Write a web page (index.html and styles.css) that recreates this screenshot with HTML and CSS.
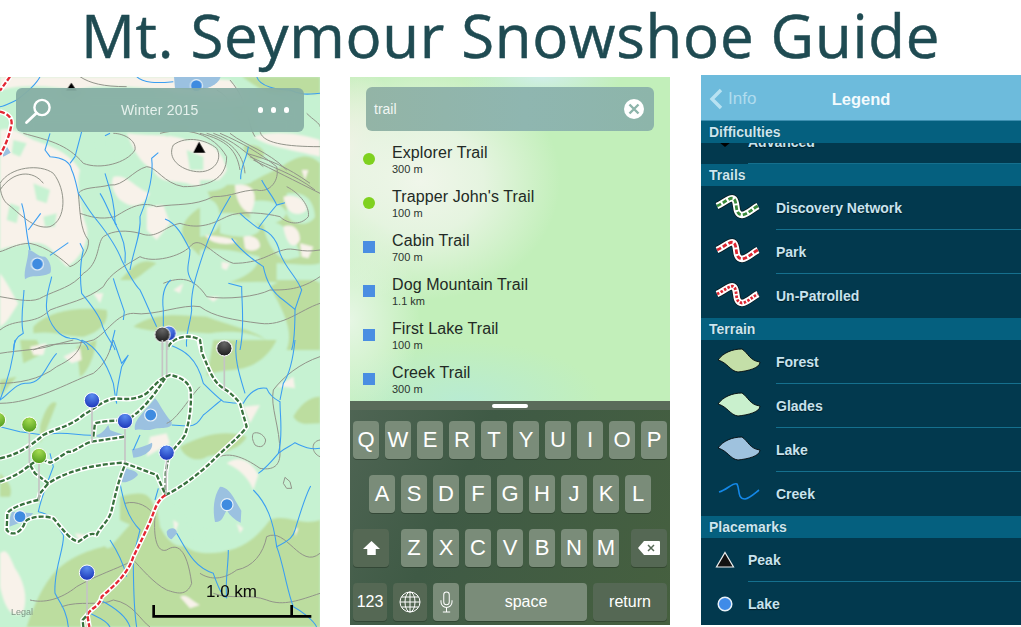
FILE: index.html
```html
<!DOCTYPE html>
<html lang="en">
<head>
<meta charset="utf-8">
<title>Mt. Seymour Snowshoe Guide</title>
<link rel="stylesheet" href="styles.css">
</head>
<body>
<h1 class="title">Mt. Seymour Snowshoe Guide</h1>
<main class="screens">

<section class="screen map-screen">
<svg class="map" viewBox="0 0 320 550" preserveAspectRatio="none">
<defs>
<radialGradient id="gblue" cx="50%" cy="20%" r="80%"><stop offset="0" stop-color="#5b8cf0"/><stop offset="1" stop-color="#1a35b8"/></radialGradient>
<radialGradient id="ggreen" cx="50%" cy="20%" r="80%"><stop offset="0" stop-color="#a5dc50"/><stop offset="1" stop-color="#4f9a1c"/></radialGradient>
<radialGradient id="gblack" cx="50%" cy="20%" r="80%"><stop offset="0" stop-color="#666"/><stop offset="1" stop-color="#1c1c1c"/></radialGradient>
<filter id="soft" x="-5%" y="-5%" width="110%" height="110%"><feGaussianBlur stdDeviation="0.8"/></filter>
<filter id="soft2" x="-5%" y="-5%" width="110%" height="110%"><feGaussianBlur stdDeviation="0.3"/></filter>
</defs>
<rect class="mint" width="320" height="550"/>

<g filter="url(#soft)">
<g transform="translate(0,-7) scale(.33333)">
<g class="cream">
<path d="M0,20 L520,20 L690,30 L740,90 C620,70 560,90 500,60 C400,50 300,40 230,60 C160,50 80,40 0,60Z"/>
<path d="M0,180 C40,170 60,190 100,210 C160,230 210,250 240,300 C230,340 235,400 260,470 C270,510 240,570 200,590 C160,550 150,510 80,520 C40,530 20,530 0,540Z"/>
<path d="M0,610 C30,650 40,680 55,700 C30,740 20,760 0,770Z"/>
<path d="M380,190 C460,200 500,190 560,210 C620,200 670,240 680,300 C660,345 600,360 560,340 C510,330 480,340 460,300 C420,280 400,240 380,190Z"/>
<path d="M340,320 C380,310 400,350 450,370 C430,410 400,420 360,390 C340,370 330,340 340,320Z"/>
<path d="M440,410 L490,405 L510,460 L470,510 L440,480Z"/>
<path d="M760,200 C820,180 900,190 960,210 L960,260 C880,240 800,230 760,200Z"/>
<path d="M280,670 L310,670 L300,700Z"/>
<path d="M520,660 L550,640 L540,670Z"/>
<path d="M620,680 L660,680 L640,695Z"/>
</g>
<g class="mint">
<path d="M100,340 L150,360 L140,400 L110,390Z"/>
<path d="M30,400 L60,410 L50,460 L20,450Z"/>
<path d="M340,250 C380,240 410,260 380,285 C350,290 330,275 340,250Z"/>
<path d="M170,200 L190,190 L190,235 L175,235Z"/>
<path d="M560,240 L610,260 L610,300 L570,300Z"/>
<path d="M470,170 C500,170 530,170 540,190 L500,200Z"/>
<path d="M130,440 L170,430 L165,470 L135,470Z"/>
<path d="M40,210 L80,220 L60,260 L35,250Z"/>
<path d="M290,210 L320,205 L320,235 L295,240Z"/>
<path d="M230,60 L300,60 L280,90 L235,90Z"/>
</g>
<g class="forest">
<path d="M725,20 C760,40 800,80 840,70 C880,60 930,80 960,70 L960,20Z"/>
<path d="M730,230 C770,215 800,240 790,260 C770,280 740,270 730,230Z"/>
<path d="M610,345 C680,340 720,350 750,340 C780,320 830,300 860,280 C900,255 930,250 960,280 L960,600 C930,640 890,620 850,640 C800,630 720,640 660,635 C640,590 590,550 560,520 C530,480 550,440 620,400 C640,385 625,370 610,345Z"/>
<path d="M360,630 C400,590 420,560 470,580 C440,600 420,620 400,630Z"/>
<path d="M810,650 C860,620 920,610 960,640 L960,840 L860,840 C880,790 860,740 810,650Z"/>
<path d="M100,770 C150,720 240,710 320,720 C330,760 290,790 250,800 C200,800 160,780 100,790Z"/>
<path d="M400,770 C470,720 560,740 620,740 C700,770 760,780 800,810 C720,770 640,790 620,790 C540,780 460,790 400,770Z"/>
</g>
<g class="mint">
<path d="M600,330 L690,330 C680,360 640,365 600,365Z"/>
<path d="M600,390 C640,380 660,400 660,450 C660,480 630,500 600,500Z"/>
<path d="M660,430 C700,425 770,440 780,480 C760,510 690,500 660,490Z"/>
<path d="M750,395 C790,385 850,395 860,430 C840,470 780,470 750,450Z"/>
<path d="M860,370 C900,365 940,375 945,440 C930,470 870,470 860,430Z"/>
<path d="M600,540 C650,530 720,545 780,560 C770,600 740,620 680,640 L600,640Z"/>
<path d="M830,580 C870,580 930,590 960,580 L960,630 L830,630Z"/>
<path d="M790,450 C830,450 890,480 900,560 L860,570 C820,560 790,500 790,450Z"/>
</g>
<g class="cream">
<path d="M705,345 C720,340 760,345 762,370 C770,390 755,430 750,430 C720,420 705,380 705,345Z"/>
<path d="M730,500 C750,495 780,500 780,530 C770,545 745,545 735,535Z"/>
<path d="M615,495 C650,500 690,500 710,515 L700,520 C670,525 630,520 615,495Z"/>
<path d="M850,380 C880,370 920,385 920,420 C900,440 860,440 850,380Z"/>
<path d="M850,470 C870,460 900,470 900,510 C885,540 860,530 850,470Z"/>
<path d="M900,520 L940,530 L925,565 L905,560Z"/>
<path d="M665,575 L690,580 L680,600 L665,595Z"/>
<path d="M905,300 L925,300 L915,330Z"/>
</g>
</g>
<g transform="translate(0,263) scale(.33333)">
<g class="forest">
<path d="M640,0 L830,0 C810,40 780,70 730,85 C680,95 640,90 620,110Z"/>
<path d="M60,0 L110,0 L130,40 L70,70Z"/>
<path d="M0,120 L0,170 L50,110Z"/>
<path d="M120,260 C140,190 160,180 170,190 C150,240 140,270 120,310Z"/>
<path d="M230,20 L290,0 C280,60 260,100 240,110Z"/>
<path d="M880,230 C910,180 940,170 960,170 L960,250 C930,250 900,260 880,230Z"/>
<path d="M540,320 C620,280 680,270 740,290 C720,330 660,340 620,350 C590,370 550,350 540,320Z"/>
<path d="M360,470 C440,450 450,460 470,520 C430,570 400,560 360,540Z"/>
<path d="M170,690 C240,630 290,630 340,610 C390,560 440,470 510,520 C520,600 560,640 620,640 C700,640 760,610 810,540 C860,520 900,560 960,540 L960,861 L80,861 C100,800 130,730 170,690Z"/>
<path d="M0,400 C20,420 40,440 30,470 L0,470Z"/>
</g>
<g class="mint">
<path d="M605,580 C625,535 700,535 725,585 C720,630 640,640 605,580Z"/>
<path d="M470,500 C510,470 560,530 575,590 C555,640 510,620 480,560Z"/>
<path d="M310,610 C340,610 350,620 320,625Z"/>
</g>
<g class="cream">
<path d="M0,640 C20,620 30,650 45,685 C70,720 85,770 70,815 C40,840 15,810 0,740Z"/>
<path d="M540,770 C560,760 570,780 600,795 L570,805Z"/>
<path d="M190,50 L240,25 L245,60 L215,70Z"/>
<path d="M90,20 L140,10 L130,45 L100,45Z"/>
<path d="M830,140 L880,110 L885,145 L850,140Z"/>
<path d="M680,370 C720,340 760,370 775,405 L760,450 C740,400 700,380 680,370Z"/>
<path d="M730,200 L780,195 L750,250Z"/>
<path d="M520,540 L535,550 L525,580Z"/>
<path d="M710,550 L730,565 L720,580Z"/>
<path d="M885,565 L895,565 L885,590Z"/>
<path d="M225,580 L260,585 L240,605Z"/>
<path d="M450,290 L500,280 L510,310 L440,350Z"/>
</g>
</g>
</g>

<g filter="url(#soft2)">
<g class="lake">
<g transform="translate(0,-7) scale(.33333)">
<path d="M522,20 L662,20 C655,45 620,58 590,60 L525,56Z"/>
<path d="M85,540 C100,540 110,560 135,560 C150,570 158,600 150,610 C120,625 95,612 75,628 C70,600 85,570 85,540Z"/>
<path d="M0,238 L22,232 L32,248 L10,260Z"/>
</g>
<g transform="translate(0,263) scale(.33333)">
<path d="M465,175 C480,190 490,220 515,245 C518,272 480,258 450,270 C430,272 415,265 405,270 C400,240 430,220 465,175Z"/>
<path d="M395,328 C420,325 440,315 456,308 C462,330 430,352 400,353Z"/>
<path d="M372,380 C385,392 410,388 414,405 C400,420 378,430 365,426Z"/>
<path d="M290,285 C310,280 320,260 325,255 L330,270 C340,275 360,280 370,285 C340,295 310,293 290,291Z"/>
<path d="M660,440 C680,440 695,460 705,480 L724,512 L722,548 C705,540 690,528 680,510 C670,530 665,548 645,546 C638,510 640,470 660,440Z"/>
<path d="M500,575 C510,560 530,562 531,580 L515,598 C505,595 500,585 500,575Z"/>
<path d="M36,515 L100,520 L80,540 L28,560 C25,545 30,530 36,515Z"/>
</g>
</g>

<g class="contour" transform="translate(0,-7) scale(.33333)">
<path d="M520,225 C560,195 620,210 650,235 C670,270 640,310 590,305 C540,300 500,265 520,225Z"/>
<path d="M0,340 C30,290 120,280 160,310 C200,360 200,450 150,470 C100,480 60,430 20,400 C10,390 0,370 0,340Z"/>
<path d="M70,190 C140,210 200,220 250,280 C300,300 380,280 405,240 C410,210 370,190 340,190"/>
<path d="M480,190 C560,170 640,190 680,260 C680,330 620,350 550,350 C490,340 470,290 440,290 C400,300 370,350 330,345 C290,355 250,350 235,370 C240,420 240,480 265,510 C270,540 240,580 210,590 C190,570 140,530 90,520 C50,520 20,540 0,545"/>
<path d="M600,190 C680,210 710,240 720,300"/><path d="M620,190 C690,210 730,250 735,310"/><path d="M640,190 C700,210 740,250 790,290"/><path d="M660,190 C730,220 780,250 830,290 C840,330 810,370 770,360 C720,360 700,380 640,380 C580,410 530,400 470,410 C420,390 380,420 345,440 C300,450 270,440 240,430"/>
<path d="M690,190 C740,230 800,240 860,300"/><path d="M740,250 C810,270 860,290 930,340"/><path d="M750,260 C810,290 880,310 945,360"/><path d="M760,270 C820,300 880,330 960,370"/>
<path d="M780,180 C780,220 860,230 960,230"/><path d="M920,130 C940,150 960,160 960,170"/>
<path d="M860,350 C900,370 930,410 925,440 C900,470 860,460 840,440 C800,430 720,420 680,440 C640,460 600,480 540,460 C490,470 470,510 420,490 C380,480 340,480 310,500 C290,520 300,580 250,610 C220,650 170,660 130,680 C100,700 60,690 0,680"/>
<path d="M960,540 C900,550 880,530 850,540 C810,550 780,580 700,580 C640,560 600,490 570,530 C540,560 460,580 420,560 C370,590 330,610 310,650 C260,690 200,700 150,720 C100,770 50,740 0,780"/>
<path d="M960,620 C900,660 860,660 810,660 C770,680 680,690 620,680 C580,620 540,620 490,640"/>
<path d="M960,700 C900,720 850,770 780,760 C700,750 640,740 600,710 C550,700 460,740 400,730 C350,730 320,790 280,810 C220,830 160,810 100,840"/>
<path d="M650,60 C690,80 700,120 720,150"/><path d="M690,30 C750,100 740,160 765,200"/>
<path d="M0,360 C40,300 100,300 130,340"/><path d="M240,20 C270,40 310,50 380,50"/>
</g>
<g class="contour" transform="translate(0,263) scale(.33333)">
<path d="M0,40 C60,30 120,30 160,15 L220,0"/>
<path d="M0,130 C50,130 120,120 170,80 C210,60 240,40 245,0"/>
<path d="M0,190 C100,190 200,130 280,100 C320,70 330,30 340,0"/>
<path d="M960,50 C900,70 850,110 820,150 C810,200 840,260 840,340 C840,385 810,390 780,385 C730,350 680,330 640,360"/>
<path d="M760,280 C770,275 790,280 797,300 C795,320 780,325 765,315 C757,300 755,290 760,280Z"/>
<path d="M850,430 L855,412 L870,425 L875,445 L860,445Z"/>
<path d="M960,300 C930,305 935,340 960,350"/>
<path d="M375,490 C410,480 450,500 465,530 C460,590 470,640 500,630 C530,610 560,620 575,730 C560,770 530,760 500,750 C460,730 420,680 400,660 C370,680 300,700 230,740 C180,780 130,790 90,780"/>
<path d="M960,640 C900,690 860,560 800,590 C790,640 760,680 710,690 C670,720 630,720 600,700"/>
<path d="M960,760 C900,780 850,800 800,780 C750,760 690,780 640,760"/>
<path d="M185,800 C240,780 300,800 340,780 C400,790 420,840 450,861"/>
<path d="M600,140 C570,170 530,240 500,250"/>
</g>

<g class="stream" transform="translate(0,-7) scale(.33333)">
<path d="M410,20 C430,40 470,40 520,35"/><path d="M120,20 C110,40 90,60 50,90 C30,100 10,110 0,110"/><path d="M770,20 C780,50 830,60 870,60 C910,80 940,70 960,70"/>
<path d="M150,190 L135,240 L150,260 C180,262 210,270 215,300 C225,320 230,350 235,370 C260,410 280,440 290,450 C330,500 350,530 365,570 C385,610 400,640 420,660 C440,700 450,730 470,770"/>
<path d="M245,185 L225,260 L210,280"/>
<path d="M315,310 C330,360 345,400 345,460 C370,500 380,540 375,580"/>
<path d="M300,370 C320,400 330,440 350,465"/>
<path d="M475,248 L455,265 C462,320 440,390 420,440 C425,490 400,540 390,600"/>
<path d="M330,190 L315,197"/>
<path d="M745,230 C740,270 720,290 722,328"/>
<path d="M785,330 C800,360 820,380 830,405 L855,398 L830,405 C810,430 790,450 775,475 C740,450 730,440 720,430"/>
<path d="M692,378 C660,430 630,490 610,550 C590,610 570,670 575,720 C570,770 555,790 560,830"/>
<path d="M495,447 C530,460 550,500 570,540 C570,580 550,600 580,640"/>
<path d="M695,505 C720,540 760,570 790,590 C800,640 820,670 850,690 L885,718 L905,660 C890,620 860,600 840,550 C830,500 800,480 775,475"/>
<path d="M885,718 C885,760 885,810 875,840"/>
<path d="M685,640 L725,650 C725,700 735,770 720,840"/>
<path d="M512,630 C490,650 485,680 490,720 L490,770"/>
<path d="M65,400 C80,450 75,480 90,540"/><path d="M122,430 L85,480"/><path d="M205,518 L150,556"/>
<path d="M240,520 L250,540 C240,580 240,630 245,670 C270,700 295,730 305,760 C315,800 340,820 345,840"/>
<path d="M155,620 C150,650 135,670 140,720 C150,770 180,800 210,805 C240,805 260,820 265,840"/>
<path d="M340,625 C350,660 365,700 373,725 L370,750"/>
<path d="M72,660 C70,700 60,750 70,790 C50,800 40,820 40,840"/>
<path d="M345,780 C340,800 335,820 330,840"/>
</g>
<g class="stream" transform="translate(0,263) scale(.33333)">
<path d="M45,0 C40,60 20,130 0,180"/><path d="M170,40 C140,70 130,130 80,130 C50,125 20,170 0,180"/>
<path d="M245,0 C290,20 320,70 340,130 C345,160 345,170 350,190"/><path d="M340,0 L365,70 L385,45 L365,80 C355,130 345,170 350,190"/>
<path d="M510,15 C550,30 590,50 610,130 C630,150 650,170 670,185 C700,190 720,190 730,190 C745,160 770,140 800,145 C810,170 830,180 840,185 C840,230 850,290 835,340 C810,370 790,390 775,400"/>
<path d="M885,0 C880,50 870,100 850,130 L840,180"/><path d="M710,0 C700,50 720,110 735,160"/>
<path d="M835,340 C860,320 870,320 885,308 C910,320 930,330 960,325"/>
<path d="M515,255 L560,258 C590,260 600,240 610,225 C630,210 650,190 665,180"/>
<path d="M0,260 L60,275 L130,285 C190,270 240,290 285,285"/>
<path d="M420,285 L400,330"/>
<path d="M150,340 L160,380 L145,420 C130,460 120,490 115,515 C150,520 170,550 190,585 C195,620 160,690 165,760 C180,790 200,810 205,861"/>
<path d="M360,430 C370,480 380,530 420,570 L400,650 C400,720 400,800 410,861"/>
<path d="M475,445 L465,480"/>
<path d="M530,580 C560,630 580,680 640,700 C650,730 670,780 680,770"/><path d="M685,630 C685,680 675,720 680,775"/>
<path d="M760,450 C800,490 820,540 830,620 C870,600 880,590 885,570 C900,520 920,460 932,438"/>
<path d="M830,620 C850,670 860,750 880,800 C900,810 940,840 950,861"/>
<path d="M330,600 C350,630 370,670 380,710"/><path d="M300,780 C340,800 380,830 390,861"/><path d="M270,820 C290,830 320,840 330,861"/>
</g>

<g class="trails" transform="translate(0,263) scale(.33333)">
<g class="casing">
<path d="M0,355 C50,345 90,320 130,285 C170,265 210,260 250,225 C285,205 310,180 345,175 C380,178 410,180 440,160 C465,135 480,115 510,105 C540,110 565,125 572,150 C575,190 570,240 555,285 C540,310 520,325 505,350 L497,400 L497,465"/>
<path d="M0,425 C30,415 60,400 90,375 L105,400 L145,430 C190,400 260,375 370,368 L470,405 L497,465"/>
<path d="M115,480 C70,490 30,505 22,520 L20,570 C40,595 70,570 75,545 C90,530 130,525 160,535 C190,570 210,600 235,605 C260,590 270,575 290,585 C300,560 330,540 335,510 C345,470 355,420 375,375"/>
<path d="M90,375 L120,355 L150,368 C170,360 200,335 205,335 C220,340 250,310 275,305 C310,300 340,295 375,290"/>
<path d="M280,290 L285,250 C300,245 340,240 375,243 C420,220 460,170 495,115"/>
<path d="M497,465 C540,445 600,400 640,360 C680,320 720,290 740,260 L720,190 C700,165 680,150 670,145 C640,125 630,95 615,60 C600,30 600,10 597,0"/>
<path d="M115,480 L120,460 L145,430"/>
<path d="M497,465 C470,480 465,510 450,545 C430,590 415,620 400,650 C385,700 340,740 305,770 C300,800 270,805 262,825 L268,861"/>
<path d="M250,861 L248,840 L262,825"/>
</g>
<g class="dash-green">
<path d="M0,355 C50,345 90,320 130,285 C170,265 210,260 250,225 C285,205 310,180 345,175 C380,178 410,180 440,160 C465,135 480,115 510,105 C540,110 565,125 572,150 C575,190 570,240 555,285 C540,310 520,325 505,350 L497,400 L497,465"/>
<path d="M0,425 C30,415 60,400 90,375 L105,400 L145,430 C190,400 260,375 370,368 L470,405 L497,465"/>
<path d="M115,480 C70,490 30,505 22,520 L20,570 C40,595 70,570 75,545 C90,530 130,525 160,535 C190,570 210,600 235,605 C260,590 270,575 290,585 C300,560 330,540 335,510 C345,470 355,420 375,375"/>
<path d="M90,375 L120,355 L150,368 C170,360 200,335 205,335 C220,340 250,310 275,305 C310,300 340,295 375,290"/>
<path d="M280,290 L285,250 C300,245 340,240 375,243 C420,220 460,170 495,115"/>
<path d="M497,465 C540,445 600,400 640,360 C680,320 720,290 740,260 L720,190 C700,165 680,150 670,145 C640,125 630,95 615,60 C600,30 600,10 597,0"/>
<path d="M115,480 L120,460 L145,430"/>
<path d="M250,861 L248,840 L262,825"/>
</g>
<path class="dash-red" d="M497,465 C470,480 465,510 450,545 C430,590 415,620 400,650 C385,700 340,740 305,770 C300,800 270,805 262,825 L268,861"/>
</g>
<g class="trails" transform="translate(0,-7) scale(.33333)">
<g class="casing">
<path d="M505,830 C520,800 570,790 600,810 L605,840"/>
<path d="M30,20 L0,62"/>
<path d="M0,125 C20,130 35,140 35,160 C30,190 20,220 0,255"/>
</g>
<path class="dash-green" d="M505,830 C520,800 570,790 600,810 L605,840"/>
<path class="dash-red" d="M30,20 L0,62"/>
<path class="dash-red" d="M0,125 C20,130 35,140 35,160 C30,190 20,220 0,255"/>
</g>
</g>

<g transform="translate(0,-7) scale(.33333)">
<path d="M597,215 L616,248 L580,248Z"/>
<path d="M214,38 L230,62 L198,62Z"/>
<circle class="lake-mark" cx="589" cy="47" r="18"/>
<circle class="lake-mark" cx="112" cy="582" r="18"/>
<g class="stalk"><path d="M487,800 L487,840"/><path d="M502,800 L502,840"/></g>
<g class="pin">
<circle cx="506" cy="790" r="22" fill="url(#gblue)"/>
<circle cx="487" cy="794" r="23" fill="url(#gblack)"/>
<circle cx="673" cy="834" r="23" fill="url(#gblack)"/>
</g>
</g>
<g transform="translate(0,263) scale(.33333)">
<circle class="lake-mark" cx="452" cy="225" r="18"/>
<circle class="lake-mark" cx="60" cy="530" r="18"/>
<circle class="lake-mark" cx="681" cy="494" r="18"/>
<g class="stalk">
<path d="M487,0 L487,110"/><path d="M500,0 L500,105"/><path d="M673,25 L673,150"/>
<path d="M276,181 L276,305"/><path d="M375,243 L375,368"/><path d="M500,338 L498,465"/>
<path d="M88,254 L88,370"/><path d="M117,348 L117,480"/><path d="M261,698 L261,825"/>
</g>
<g class="pin">
<circle cx="276" cy="181" r="23" fill="url(#gblue)"/>
<circle cx="375" cy="243" r="23" fill="url(#gblue)"/>
<circle cx="500" cy="338" r="23" fill="url(#gblue)"/>
<circle cx="261" cy="698" r="23" fill="url(#gblue)"/>
<circle cx="88" cy="254" r="23" fill="url(#ggreen)"/>
<circle cx="117" cy="348" r="23" fill="url(#ggreen)"/>
<circle cx="-6" cy="240" r="23" fill="url(#ggreen)"/>
<circle cx="673" cy="25" r="23" fill="url(#gblack)"/>
</g>
<g class="scalebar">
<path d="M461,795 L461,829 L934,829"/><path d="M875,795 L875,829"/>
</g>
</g>
</svg>

<div class="map-bar">
<svg class="bar-icon" viewBox="0 0 30 30"><circle cx="18" cy="11.5" r="7.6" fill="none" stroke="#fff" stroke-width="2.4"/><path d="M12.5,17 L2.5,26.5" stroke="#fff" stroke-width="2.8" stroke-linecap="round"/></svg>
<span class="map-season">Winter 2015</span>
<span class="dots"><i></i><i></i><i></i></span>
</div>
<span class="scale-label">1.0 km</span>
<span class="legal">Legal</span>
</section>

<section class="screen search-screen">
<div class="results">
<div class="search-field"><span>trail</span>
<svg class="clear" viewBox="0 0 20 20"><circle cx="10" cy="10" r="10" fill="#fff"/><path d="M5.5,5.5 L14.5,14.5 M14.5,5.5 L5.5,14.5" stroke="#8db5ab" stroke-width="2.4"/></svg>
</div>
<ul class="result-list">
<li class="result"><i class="mark dot"></i><div><p class="result-name">Explorer Trail</p><p class="result-dist">300 m</p></div></li>
<li class="result"><i class="mark dot"></i><div><p class="result-name">Trapper John's Trail</p><p class="result-dist">100 m</p></div></li>
<li class="result"><i class="mark square"></i><div><p class="result-name">Cabin Trail</p><p class="result-dist">700 m</p></div></li>
<li class="result"><i class="mark square"></i><div><p class="result-name">Dog Mountain Trail</p><p class="result-dist">1.1 km</p></div></li>
<li class="result"><i class="mark square"></i><div><p class="result-name">First Lake Trail</p><p class="result-dist">100 m</p></div></li>
<li class="result"><i class="mark square"></i><div><p class="result-name">Creek Trail</p><p class="result-dist">300 m</p></div></li>
</ul>
</div>
<div class="keyboard">
<div class="handle-bar"><span class="handle"></span></div>
<div class="key-rows">
<div class="key-row"><b class="key">Q</b><b class="key">W</b><b class="key">E</b><b class="key">R</b><b class="key">T</b><b class="key">Y</b><b class="key">U</b><b class="key">I</b><b class="key">O</b><b class="key">P</b></div>
<div class="key-row"><b class="key">A</b><b class="key">S</b><b class="key">D</b><b class="key">F</b><b class="key">G</b><b class="key">H</b><b class="key">J</b><b class="key">K</b><b class="key">L</b></div>
<div class="key-row"><b class="key dark w36"><svg viewBox="0 0 20 18" class="kicon"><path d="M10,1 L19,9.5 L14.5,9.5 L14.5,16 L5.5,16 L5.5,9.5 L1,9.5Z" fill="#fff"/></svg></b><span class="spacer"></span><b class="key">Z</b><b class="key">X</b><b class="key">C</b><b class="key">V</b><b class="key">B</b><b class="key">N</b><b class="key">M</b><span class="spacer"></span><b class="key dark w36"><svg viewBox="0 0 24 16" class="kicon wide"><path d="M7,1 L22,1 Q23,1 23,2 L23,14 Q23,15 22,15 L7,15 L1,8Z" fill="#fff"/><path d="M11,5 L17,11 M17,5 L11,11" stroke="#566a56" stroke-width="1.5"/></svg></b></div>
<div class="key-row"><b class="key dark w34 small">123</b><b class="key dark w34"><svg viewBox="0 0 22 22" class="kicon globe"><g fill="none" stroke="#fff" stroke-width="1"><circle cx="11" cy="11" r="10"/><ellipse cx="11" cy="11" rx="5" ry="10"/><path d="M11,1 V21 M1,11 H21 M2.5,6 H19.5 M2.5,16 H19.5"/></g></svg></b><b class="key"><svg viewBox="0 0 14 24" class="kicon mic"><g fill="none" stroke="#fff" stroke-width="1.1"><rect x="4" y="1" width="6" height="14" rx="3"/><path d="M1,10 V12 A6,6 0 0 0 13,12 V10 M7,18 V23 M3,23 H11"/></g></svg></b><b class="key space small">space</b><b class="key dark return small">return</b></div>
</div>
</div>
</section>

<section class="screen legend-screen">
<header class="nav">
<svg class="chev" viewBox="0 0 14 22"><path d="M12,2 L3,11 L12,20" fill="none" stroke="#b8e2f2" stroke-width="3.4"/></svg>
<span class="nav-back">Info</span>
<span class="nav-title">Legend</span>
</header>
<h2 class="sect">Difficulties</h2>
<div class="clipped"><div class="row place"><svg class="place-icon" viewBox="0 0 20 20"><path d="M-2,5 L22,5 L10,15Z" fill="#000"/></svg><div class="row-label">Advanced</div></div></div>
<h2 class="sect">Trails</h2>
<div class="row"><svg class="swatch" viewBox="0 0 46 30"><path class="sq-o" d="M2,14 C9,11 16,4 19,7 C23,11 19,22 27,23 C33,22 37,17 43,14"/><path class="sq-w" d="M2,14 C9,11 16,4 19,7 C23,11 19,22 27,23 C33,22 37,17 43,14"/><path class="sq-d green" d="M2,14 C9,11 16,4 19,7 C23,11 19,22 27,23 C33,22 37,17 43,14"/></svg><div class="row-label">Discovery Network</div></div>
<div class="row"><svg class="swatch" viewBox="0 0 46 30"><path class="sq-o" d="M2,14 C9,11 16,4 19,7 C23,11 19,22 27,23 C33,22 37,17 43,14"/><path class="sq-w" d="M2,14 C9,11 16,4 19,7 C23,11 19,22 27,23 C33,22 37,17 43,14"/><path class="sq-d red" d="M2,14 C9,11 16,4 19,7 C23,11 19,22 27,23 C33,22 37,17 43,14"/></svg><div class="row-label">Park</div></div>
<div class="row"><svg class="swatch" viewBox="0 0 46 30"><path class="sq-o" d="M2,14 C9,11 16,4 19,7 C23,11 19,22 27,23 C33,22 37,17 43,14"/><path class="sq-w" d="M2,14 C9,11 16,4 19,7 C23,11 19,22 27,23 C33,22 37,17 43,14"/><path class="sq-d red tight" d="M2,14 C9,11 16,4 19,7 C23,11 19,22 27,23 C33,22 37,17 43,14"/></svg><div class="row-label last">Un-Patrolled</div></div>
<h2 class="sect">Terrain</h2>
<div class="row"><svg class="swatch" viewBox="0 0 46 30"><path class="blob b-forest" d="M3,14 C8,7 17,3 27,3 C33,7 35,15 45,16 C45,22 33,25 23,26 C15,25 13,17 3,14Z"/></svg><div class="row-label">Forest</div></div>
<div class="row"><svg class="swatch" viewBox="0 0 46 30"><path class="blob b-glades" d="M3,14 C8,7 17,3 27,3 C33,7 35,15 45,16 C45,22 33,25 23,26 C15,25 13,17 3,14Z"/></svg><div class="row-label">Glades</div></div>
<div class="row"><svg class="swatch" viewBox="0 0 46 30"><path class="blob b-lake" d="M3,14 C8,7 17,3 27,3 C33,7 35,15 45,16 C45,22 33,25 23,26 C15,25 13,17 3,14Z"/></svg><div class="row-label">Lake</div></div>
<div class="row"><svg class="swatch" viewBox="0 0 46 30"><path class="creek" d="M4,14 C12,12 18,4 22,6 C25,11 22,21 30,21 C35,20 40,15 44,12"/></svg><div class="row-label last">Creek</div></div>
<h2 class="sect">Placemarks</h2>
<div class="row place"><svg class="place-icon" viewBox="0 0 20 20"><path d="M10,2.5 L18.5,17 L1.5,17Z" fill="#111" stroke="#eee" stroke-width="1.2"/></svg><div class="row-label">Peak</div></div>
<div class="row place"><svg class="place-icon" viewBox="0 0 20 20"><circle cx="10" cy="10" r="6.8" fill="#3f8be8" stroke="#e8f1f8" stroke-width="1.5"/></svg><div class="row-label last">Lake</div></div>
</section>

</main>
</body>
</html>
```

FILE: styles.css
```css
* { box-sizing: border-box; }
html, body { margin: 0; padding: 0; background: #fff; }
body { width: 1021px; height: 627px; overflow: hidden; font-family: "Liberation Sans", Arial, sans-serif; }
p, ul, h1, h2 { margin: 0; padding: 0; }
ul { list-style: none; }
i, b { font-style: normal; font-weight: 400; }

.title {
  height: 75px;
  font-family: "Open Sans", "DejaVu Sans", sans-serif;
  font-weight: 400;
  font-size: 60px;
  line-height: 71px;
  letter-spacing: .7px;
  text-align: center;
  color: #1f4b52;
  white-space: nowrap;
  -webkit-text-stroke: .5px #1f4b52;
}

.screens { display: flex; gap: 30px; align-items: flex-start; }
.screen { width: 320px; flex: none; overflow: hidden; position: relative; }

/* Map */
.map-screen { height: 550px; margin-top: 2px; }
.map { position: absolute; inset: 0; width: 320px; height: 550px; display: block; }
.mint { fill: #c6f2d2; }
.cream { fill: #f8f2ea; }
.forest { fill: #bcdd9f; }
.lake { fill: #9bc1e0; }
.contour { fill: none; stroke: #92948a; stroke-width: 3; }
.stream { fill: none; stroke: #3a9ef2; stroke-width: 3.2; }
.trails { fill: none; stroke-linejoin: round; }
.casing { stroke: #fff; stroke-width: 15; }
.dash-green { stroke: #37713d; stroke-width: 7; stroke-dasharray: 15 6; }
.dash-red { stroke: #e32733; stroke-width: 7; stroke-dasharray: 15 6; }
.lake-mark { fill: #3f8be0; stroke: #e8f1f8; stroke-width: 3.5; }
.stalk { stroke: #c4c4c4; stroke-width: 5; }
.pin { stroke: #fff; stroke-width: 3; }
.scalebar { fill: none; stroke: #000; stroke-width: 8; }
.map-bar {
  position: relative;
  margin: 11px 16px 0;
  height: 44px;
  padding: 0 15px 0 8px;
  display: flex;
  align-items: center;
  border-radius: 6px;
  color: #e6f1ed;
  background: rgba(128, 168, 160, 0.86);
  backdrop-filter: blur(8px);
}
.bar-icon { width: 30px; height: 30px; flex: none; margin-top: 2px; }
.map-season { flex: 1; text-align: center; font-size: 14px; letter-spacing: .2px; padding-left: 8px; }
.dots { display: flex; gap: 7.5px; }
.dots i { width: 5.5px; height: 5.5px; border-radius: 50%; background: #fff; }
.scale-label { position: absolute; left: 206px; top: 505px; font-size: 17px; line-height: 20px; color: #0a0a0a; }
.legal { position: absolute; left: 11px; top: 530px; font-size: 9px; line-height: 11px; color: #7f9484; }

/* Search */
.search-screen { height: 548px; margin-top: 2px; display: flex; flex-direction: column; }
.results {
  height: 324px;
  padding: 10px 0 0 13px;
  background:
    radial-gradient(ellipse 80px 28px at 60% 0%, #cfeee8 0%, rgba(207,238,232,0) 100%),
    radial-gradient(ellipse 140px 120px at 22% 32%, #f0f6ea 0%, rgba(235,245,230,.85) 45%, rgba(225,245,225,0) 100%),
    radial-gradient(ellipse 50px 90px at 0% 22%, #f2efe2 0%, rgba(242,239,226,0) 100%),
    radial-gradient(ellipse 70px 100px at 0% 75%, #e6f6e4 0%, rgba(230,246,228,0) 100%),
    radial-gradient(ellipse 140px 60px at 35% 100%, #b8ebd2 0%, rgba(184,235,210,0) 100%),
    #c2efba;
}
.search-field {
  margin: 0 16px 0 3px;
  height: 44px;
  padding: 0 10px 0 8px;
  display: flex;
  align-items: center;
  justify-content: space-between;
  border-radius: 6px;
  background: linear-gradient(90deg, #93b4a6 0%, #8fb6b0 55%, #8db5aa 100%);
  color: #f1f6f3;
  font-size: 14px;
}
.clear { width: 20px; height: 20px; flex: none; }
.result-list { margin-top: 5px; }
.result { height: 44px; display: flex; align-items: flex-start; gap: 17px; padding-top: 7px; }
.mark { width: 12px; height: 12px; flex: none; margin-top: 10px; }
.dot { border-radius: 50%; background: #7fd11f; }
.square { background: #4a8ee2; }
.result-name { font-size: 16px; line-height: 20px; color: #222a25; letter-spacing: .1px; }
.result-dist { font-size: 11px; line-height: 13px; color: #2c352f; }

.keyboard { flex: 1; background: linear-gradient(115deg, #4f6554, #3f5a45 35%, #46603f 100%); }
.handle-bar { height: 9px; background: #5a6b5a; display: flex; justify-content: center; align-items: center; }
.handle { width: 36px; height: 4px; border-radius: 2px; background: #fff; }
.key-rows { padding-top: 11px; display: flex; flex-direction: column; gap: 16px; }
.key-row { display: flex; justify-content: center; gap: 6px; }
.key {
  width: 26px;
  height: 38px;
  border-radius: 4px;
  background: #7a8c79;
  box-shadow: 0 1px 0 rgba(30, 45, 30, .45);
  color: #fff;
  font-size: 22px;
  display: flex;
  align-items: center;
  justify-content: center;
}
.dark { background: #556854; }
.w36 { width: 36px; }
.w34 { width: 34px; }
.space { width: 122px; }
.return { width: 74px; }
.small { font-size: 16px; }
.spacer { width: 0; flex: none; }
.kicon { width: 19px; height: 17px; display: block; }
.kicon.wide { width: 24px; height: 16px; }
.kicon.globe { width: 22px; height: 22px; }
.kicon.mic { width: 13px; height: 22px; }

/* Legend */
.legend-screen { height: 550px; margin-left: 1px; background: #02394e; color: #cfe7f0; }
.nav {
  height: 46px;
  padding: 3px 0 0 8px;
  display: flex;
  align-items: center;
  position: relative;
  background: #6dbbdc;
  border-bottom: 1px solid #3e8fb0;
}
.chev { width: 14px; height: 22px; flex: none; }
.nav-back { margin-left: 5px; font-size: 17px; color: #b0dcee; }
.nav-title { position: absolute; left: 0; right: 0; text-align: center; font-size: 16.5px; font-weight: 700; color: #f3fafd; }
.sect {
  height: 22px;
  padding-left: 8px;
  font-size: 14px;
  font-weight: 700;
  line-height: 23px;
  color: #cde6f0;
  background: #05607f;
  text-shadow: 0 0 1px rgba(0,0,0,.5);
}
.clipped { height: 21px; overflow: hidden; }
.clipped .row { margin-top: -23px; }
.row { height: 44px; padding-left: 14px; display: flex; align-items: stretch; }
.swatch { width: 46px; height: 30px; flex: none; align-self: center; margin: 0 15px 2px 0; }
.row-label {
  flex: 1;
  display: flex;
  align-items: center;
  font-size: 14px;
  font-weight: 700;
  color: #c8e3ee;
  text-shadow: 0 1px 1px rgba(0,0,0,.55);
  border-bottom: 1px solid #15708e;
}
.row-label.last { border-bottom: 0; }
.place-icon { width: 20px; height: 20px; flex: none; align-self: center; margin-right: 13px; }
.sq-o { fill: none; stroke: #0a1a20; stroke-width: 8; }
.sq-w { fill: none; stroke: #fff; stroke-width: 6.5; }
.sq-d { fill: none; stroke-width: 2.8; stroke-dasharray: 4.5 2; }
.sq-d.green { stroke: #3a8a3a; }
.sq-d.red { stroke: #dd2530; }
.sq-d.tight { stroke-dasharray: 2.5 1.5; }
.blob { stroke: #050a0c; stroke-width: .9; }
.b-forest { fill: #c4dfa8; }
.b-glades { fill: #c9f0cd; }
.b-lake { fill: #9fc2de; }
.creek { fill: none; stroke: #1487e6; stroke-width: 1.6; }
```
